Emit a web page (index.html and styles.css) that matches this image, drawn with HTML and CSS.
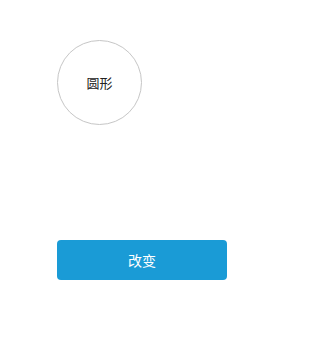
FILE: index.html
```html
<!DOCTYPE html>
<html lang="zh">
<head>
    <meta charset="UTF-8">
    <meta name="viewport" content="width=device-width, initial-scale=1.0">
    <title>圆形</title>
    <link rel="stylesheet" href="styles.css">
</head>
<body>
    <div id="stage">
        <div class="shape">圆形</div>
        <button class="change">改变</button>
    </div>
</body>
</html>
```

FILE: styles.css
```css
body {
    margin: 0;
    background-color: #fff;
    font-family: "Noto Sans CJK SC", "Noto Sans", sans-serif;
}
#stage {
    display: flex;
    flex-direction: column;
    align-items: flex-start;
    padding: 40px 0 0 57px;
}
.shape {
    width: 85px;
    height: 85px;
    box-sizing: border-box;
    border: 1px solid #c6c6c6;
    border-radius: 50%;
    display: flex;
    justify-content: center;
    align-items: center;
    font-size: 13px;
    color: #222;
}
.change {
    margin-top: 115px;
    width: 170px;
    height: 40px;
    border: none;
    border-radius: 4px;
    background-color: #1a9bd6;
    color: #fff;
    font-family: "Noto Sans CJK SC", "Noto Sans", sans-serif;
    font-size: 14px;
    cursor: pointer;
}
```
